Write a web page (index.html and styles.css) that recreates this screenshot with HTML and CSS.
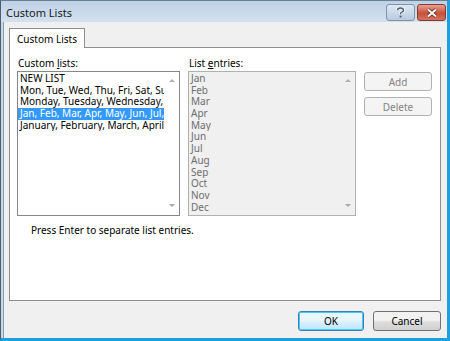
FILE: index.html
```html
<!DOCTYPE html>
<html lang="en">
  <head>
    <meta charset="UTF-8">
    <title>Custom Lists</title>
    <link rel="stylesheet" href="styles.css">
  </head>
  <body>
    <div class="window">
      <div class="titlebar">
        <span class="title">Custom Lists</span>
        <div class="caption-buttons">
          <div class="cap-btn help">
            <svg width="9" height="11" viewBox="0 0 9 11">
              <path d="M1.5 3.2 Q1.5 1 4.5 1 Q7.5 1 7.5 3.2 Q7.5 4.6 5.4 5.4 Q4.5 5.8 4.5 7.2" fill="none" stroke="#fff" stroke-width="3"/>
              <path d="M1.5 3.2 Q1.5 1 4.5 1 Q7.5 1 7.5 3.2 Q7.5 4.6 5.4 5.4 Q4.5 5.8 4.5 7.2" fill="none" stroke="#4b5f74" stroke-width="1.4"/>
              <rect x="3.6" y="8.6" width="1.9" height="1.9" fill="#4b5f74"/>
            </svg>
          </div>
          <div class="cap-btn close">
            <svg width="12" height="10" viewBox="0 0 12 10">
              <path d="M2 1.5 L10 8.5 M10 1.5 L2 8.5" stroke="#5a1d12" stroke-width="3.4"/>
              <path d="M2 1.5 L10 8.5 M10 1.5 L2 8.5" stroke="#fff" stroke-width="2"/>
            </svg>
          </div>
        </div>
      </div>

      <div class="body">
        <div class="tabs">
          <div class="tab">Custom Lists</div>
        </div>
        <div class="panel">
          <div class="columns">
            <div class="col col-lists">
              <div class="label">Custom <u>l</u>ists:</div>
              <div class="listbox">
                <div class="items">
                  <div class="item">NEW LIST</div>
                  <div class="item">Mon, Tue, Wed, Thu, Fri, Sat, Sun</div>
                  <div class="item">Monday, Tuesday, Wednesday, Thursday, Friday</div>
                  <div class="item selected">Jan, Feb, Mar, Apr, May, Jun, Jul, Aug</div>
                  <div class="item">January, February, March, April, May</div>
                </div>
                <div class="scroll">
                  <span class="arrow up"></span>
                  <span class="arrow down"></span>
                </div>
              </div>
            </div>
            <div class="col col-entries">
              <div class="label">List <u>e</u>ntries:</div>
              <div class="listbox disabled">
                <div class="items">
                  <div class="item">Jan</div>
                  <div class="item">Feb</div>
                  <div class="item">Mar</div>
                  <div class="item">Apr</div>
                  <div class="item">May</div>
                  <div class="item">Jun</div>
                  <div class="item">Jul</div>
                  <div class="item">Aug</div>
                  <div class="item">Sep</div>
                  <div class="item">Oct</div>
                  <div class="item">Nov</div>
                  <div class="item">Dec</div>
                </div>
                <div class="scroll">
                  <span class="arrow up"></span>
                  <span class="arrow down"></span>
                </div>
              </div>
            </div>
            <div class="col col-buttons">
              <button class="btn small" disabled>Add</button>
              <button class="btn small" disabled>Delete</button>
            </div>
          </div>
          <p class="hint">Press Enter to separate list entries.</p>
        </div>
        <div class="footer">
          <button class="btn default">OK</button>
          <button class="btn">Cancel</button>
        </div>
      </div>
    </div>
  </body>
</html>
```

FILE: styles.css
```css
html, body {
  margin: 0;
  padding: 0;
}

body {
  width: 450px;
  height: 341px;
  overflow: hidden;
  font-family: "Noto Sans", sans-serif;
  font-size: 10px;
  color: #000;
}

.window {
  box-sizing: border-box;
  width: 450px;
  height: 341px;
  display: flex;
  flex-direction: column;
  background: #c6d8ea;
  border-left: 1px solid #4d5c6b;
  border-right: 3px solid #1ca0df;
  border-bottom: 3px solid #1ca0df;
  border-top: 1px solid #6a7e92;
}

.titlebar {
  height: 21px;
  display: flex;
  align-items: center;
  justify-content: space-between;
  padding: 0 1px 0 5px;
  background: linear-gradient(#bfd2e6, #d3e1ef);
}

.title {
  font-size: 11px;
  color: #1a1a1a;
  margin-top: 1px;
}

.caption-buttons {
  display: flex;
  gap: 2px;
  margin-top: 3px;
  align-self: flex-start;
}

.cap-btn {
  height: 15px;
  display: flex;
  align-items: center;
  justify-content: center;
  border-radius: 3px;
  border: 1px solid #7f93a8;
}

.cap-btn.help {
  width: 27px;
  background: linear-gradient(#dde8f3, #b9cbdf);
}

.cap-btn.close {
  width: 27px;
  border-color: #8a3a2c;
  background: linear-gradient(#e8a293, #c7503a 55%, #d27361);
}

.body {
  flex: 1;
  display: flex;
  flex-direction: column;
  margin: 0 0 0 2px;
  padding: 6px 6px 0 5px;
  background: #f0f0f0;
  border-left: 1px solid #8a9bad;
}

.tabs {
  display: flex;
  height: 19px;
  position: relative;
  z-index: 1;
}

.tab {
  box-sizing: border-box;
  width: 76px;
  height: 20px;
  border: 1px solid #8e8f8f;
  border-bottom: none;
  background: #fff;
  display: flex;
  align-items: center;
  justify-content: center;
  padding-top: 1px;
}

.panel {
  box-sizing: border-box;
  height: 254px;
  background: #fff;
  border: 1px solid #8e8f8f;
  padding: 9px 0 0 7px;
}

.columns {
  display: flex;
}

.col-lists {
  width: 171px;
}

.col-entries {
  width: 176px;
}

.label {
  height: 14px;
  line-height: 13px;
  margin-left: 1px;
}

.listbox {
  box-sizing: border-box;
  display: flex;
  height: 145px;
  border: 1px solid #828790;
  background: #fff;
}

.col-lists .listbox {
  width: 163px;
}

.col-entries .listbox {
  width: 168px;
}

.listbox.disabled {
  background: #f0f0f0;
  border-color: #adb2b5;
  color: #6d6d6d;
}

.items {
  flex: 1;
  overflow: hidden;
  padding-top: 1px;
}

.item {
  height: 11.7px;
  line-height: 11.7px;
  white-space: nowrap;
  padding-left: 2px;
  overflow: hidden;
}

.item.selected {
  background: #3399ff;
  color: #fff;
}

.scroll {
  width: 15px;
  display: flex;
  flex-direction: column;
  justify-content: space-between;
  align-items: center;
  padding: 7px 0 8px;
}

.arrow {
  width: 0;
  height: 0;
  border-left: 3px solid transparent;
  border-right: 3px solid transparent;
}

.arrow.up {
  border-bottom: 3px solid #b0b0b0;
}

.arrow.down {
  border-top: 3px solid #a8a8a8;
}

.col-buttons {
  display: flex;
  flex-direction: column;
  gap: 6px;
  padding-top: 15px;
}

.btn {
  box-sizing: border-box;
  font-family: inherit;
  font-size: 10px;
  width: 68px;
  height: 20px;
  border: 1px solid #707070;
  border-radius: 3px;
  background: linear-gradient(#f2f2f2 45%, #dddddd 55%, #cfcfcf);
  color: #000;
  padding: 0;
}

.btn.small {
  height: 19px;
}

.btn:disabled {
  background: #f4f4f4;
  border-color: #adb2b5;
  color: #838383;
}

.btn.default {
  width: 66px;
  border-color: #3c7fb1;
  box-shadow: inset 0 0 0 1px #48c8f8;
  background: linear-gradient(#eaf6fd 45%, #d9f0fc 55%, #bee6fd);
}

.hint {
  margin: 7px 0 0 14px;
}

.footer {
  display: flex;
  justify-content: flex-end;
  gap: 9px;
  padding: 10px 0 0;
}
```
